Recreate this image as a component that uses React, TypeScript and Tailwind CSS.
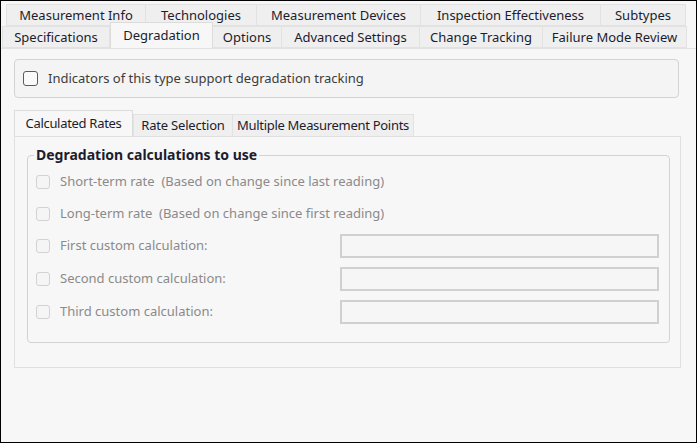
import React from 'react';

const topRow = [
  { label: 'Measurement Info', w: 'w-[140px]' },
  { label: 'Technologies', w: 'w-[112px]' },
  { label: 'Measurement Devices', w: 'w-[165px]' },
  { label: 'Inspection Effectiveness', w: 'w-[181px]' },
  { label: 'Subtypes', w: 'w-[86px]' },
];

const bottomRow = [
  { label: 'Specifications', w: 'w-[108px]' },
  { label: 'Degradation', w: 'w-[103px]', active: true },
  { label: 'Options', w: 'w-[70px]' },
  { label: 'Advanced Settings', w: 'w-[139px]' },
  { label: 'Change Tracking', w: 'w-[124px]' },
  { label: 'Failure Mode Review', w: 'w-[145px]' },
];

const rates = [
  { label: 'Short-term rate  (Based on change since last reading)', h: 'h-[32px]' },
  { label: 'Long-term rate  (Based on change since first reading)', h: 'h-[31px]' },
  { label: 'First custom calculation:', h: 'h-[33px]', input: true },
  { label: 'Second custom calculation:', h: 'h-[33px]', input: true },
  { label: 'Third custom calculation:', h: 'h-[33px]', input: true },
];

const Tab = ({ label, w, active }: { label: string; w: string; active?: boolean }) => (
  <div
    className={
      active
        ? `${w} relative z-10 h-[26px] -mt-[3px] pt-px flex items-center justify-center whitespace-nowrap border border-b-0 border-[#dcdcdc] bg-[#f7f7f7] text-[#1c1c2e]`
        : `${w} h-full pt-[2px] flex items-center justify-center whitespace-nowrap border border-[#e2e2e2] -ml-px first:ml-0 bg-[#efefef] text-[#1c1c2e]`
    }
  >
    {label}
  </div>
);

const Check = ({ disabled }: { disabled?: boolean }) => (
  <span
    className={
      disabled
        ? 'w-[14px] h-[14px] shrink-0 rounded-[3px] border border-[#d2d2d2] bg-[#f5f5f5]'
        : 'w-[15px] h-[15px] shrink-0 rounded-[3px] border border-[#5c5c5c] bg-[#fafafa]'
    }
  />
);

export default function App() {
  return (
    <div className="w-[697px] h-[443px] border border-black bg-[#f7f7f7] font-['Noto_Sans',sans-serif] text-[13px] overflow-hidden">
      {/* page tabs, two rows */}
      <div className="pt-[3px]">
        <div className="flex h-[22px] pl-[5px]">
          {topRow.map((t) => (
            <Tab key={t.label} {...t} />
          ))}
        </div>
        <div className="flex h-[23px] pl-[1px] items-end border-b border-[#e2e2e2]">
          {bottomRow.map((t) => (
            <Tab key={t.label} {...t} />
          ))}
        </div>
      </div>

      <div className="px-[13px]">
        <div className="mt-[10px] w-[665px] h-[39px] rounded-[4px] border border-[#d3d3d3] bg-[#f4f4f4] flex items-center pl-[8px] gap-[10px] text-[#3c3c3c]">
          <Check />
          <span>Indicators of this type support degradation tracking</span>
        </div>

        {/* inner tabs */}
        <div className="mt-[13px] flex h-[25px] items-end whitespace-nowrap">
          <div className="relative z-10 w-[119px] h-[26px] flex items-center justify-center border border-b-0 border-[#dcdcdc] bg-[#f7f7f7] text-[#1c1c2e] tracking-[-0.3px]">
            Calculated Rates
          </div>
          <div className="w-[100px] h-[22px] pt-px flex items-center justify-center border border-b-0 border-[#e2e2e2] bg-[#efefef] text-[#1c1c2e] tracking-[-0.2px]">
            Rate Selection
          </div>
          <div className="w-[182px] h-[22px] pt-px -ml-px flex items-center justify-center border border-b-0 border-[#e2e2e2] bg-[#efefef] text-[#1c1c2e] tracking-[-0.3px]">
            Multiple Measurement Points
          </div>
        </div>

        <div className="w-[667px] h-[232px] border border-[#e0e0e0] bg-[#f7f7f7]">
          <fieldset className="ml-[12px] mt-[9px] w-[643px] h-[197px] rounded-[4px] border border-[#d3d3d3]">
            <legend className="ml-[6px] px-[2px] font-bold text-[14px] text-[#1c1c2e] leading-[18px]">
              Degradation calculations to use
            </legend>
            <div className="pt-[2px] pl-[8px]">
              {rates.map((r) => (
                <div key={r.label} className={`${r.h} flex items-center`}>
                  <div className="w-[304px] flex items-center gap-[10px] text-[#8a8a8a] whitespace-pre">
                    <Check disabled />
                    <span>{r.label}</span>
                  </div>
                  {r.input && <div className="w-[319px] h-[24px] border-2 border-[#d0d0d0] bg-[#f6f6f6]" />}
                </div>
              ))}
            </div>
          </fieldset>
        </div>
      </div>
    </div>
  );
}
